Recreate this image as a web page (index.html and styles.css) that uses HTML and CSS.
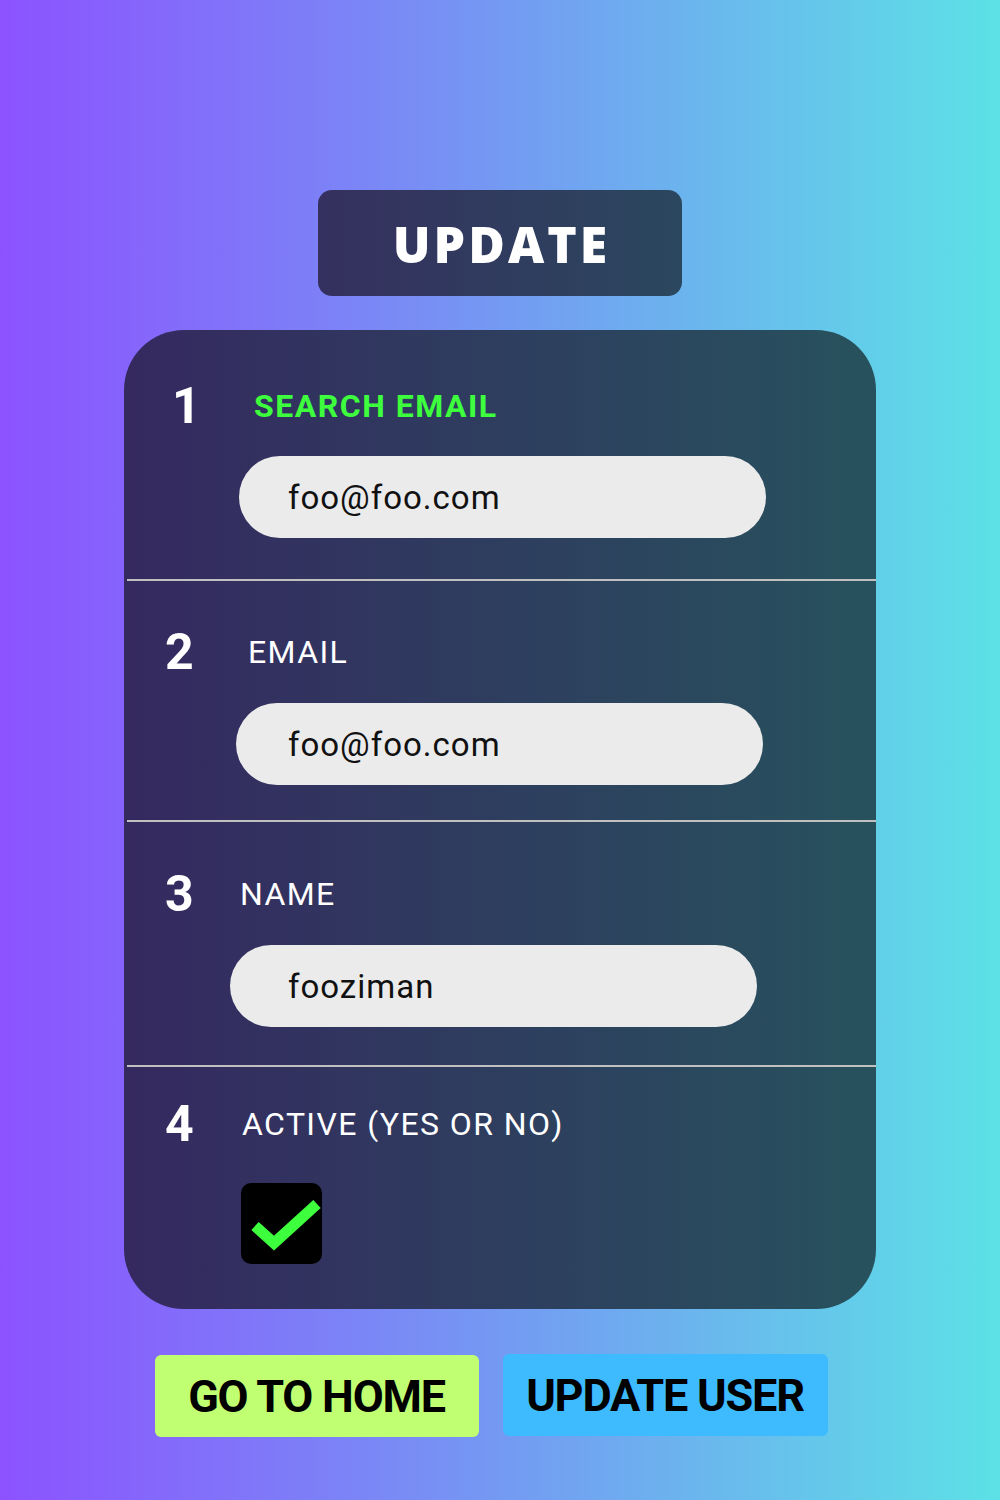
FILE: index.html
```html
<!DOCTYPE html>
<html lang="en">
<head>
<meta charset="utf-8">
<title>Update</title>
<link rel="stylesheet" href="styles.css">
</head>
<body>
<main class="page">
  <h1 class="title">UPDATE</h1>
  <section class="card">
    <div class="row row-1">
      <div class="row-head">
        <span class="num num-1">1</span>
        <span class="label label-accent">SEARCH EMAIL</span>
      </div>
      <div class="field field-1">foo@foo.com</div>
    </div>
    <div class="row row-2">
      <div class="row-head">
        <span class="num">2</span>
        <span class="label label-2">EMAIL</span>
      </div>
      <div class="field field-2">foo@foo.com</div>
    </div>
    <div class="row row-3">
      <div class="row-head">
        <span class="num">3</span>
        <span class="label label-3">NAME</span>
      </div>
      <div class="field field-3">fooziman</div>
    </div>
    <div class="row row-4">
      <div class="row-head">
        <span class="num">4</span>
        <span class="label label-4">ACTIVE (YES OR NO)</span>
      </div>
      <div class="check">
        <svg width="81" height="81" viewBox="0 0 81 81" aria-hidden="true">
          <polyline points="14,43 33,60 76,21" fill="none" stroke="#3dff3d" stroke-width="11" stroke-linejoin="miter" stroke-linecap="butt"/>
        </svg>
      </div>
    </div>
  </section>
  <div class="actions">
    <button class="btn btn-home">GO TO HOME</button>
    <button class="btn btn-update">UPDATE USER</button>
  </div>
</main>
</body>
</html>
```

FILE: styles.css
```css
html, body {
  margin: 0;
  padding: 0;
}
body {
  width: 1000px;
  height: 1500px;
  background: linear-gradient(90deg, #8c52ff 0%, #5ce1e6 100%);
  font-family: Roboto, "Liberation Sans", sans-serif;
  overflow: hidden;
}
.page {
  display: flex;
  flex-direction: column;
  align-items: center;
  padding-top: 190px;
}
.title {
  margin: 0;
  width: 364px;
  height: 106px;
  border-radius: 14px;
  background: linear-gradient(90deg, #35305f 0%, #2b475e 100%);
  color: #fff;
  font-family: "Open Sans", "DejaVu Sans", sans-serif;
  font-weight: 800;
  font-size: 50px;
  letter-spacing: 3px;
  display: flex;
  align-items: center;
  justify-content: center;
  box-sizing: border-box;
  padding: 2px 0 0 3px;
}
.card {
  margin-top: 34px;
  width: 752px;
  border-radius: 60px;
  background: linear-gradient(90deg, #352960 0%, #27525d 100%);
  overflow: hidden;
  color: #fff;
}
.row {
  display: flex;
  flex-direction: column;
  align-items: flex-start;
}
.row + .row {
  border-top: 2px solid #c0c0c0;
  margin-left: 3px;
}
.row-head {
  display: flex;
  align-items: center;
  height: 52px;
}
.num {
  font-weight: 700;
  font-size: 50px;
  line-height: 52px;
  width: 41px;
  padding-left: 38px;
}
.num-1 {
  padding-left: 48px;
}
.label {
  font-size: 32px;
  line-height: 52px;
  font-weight: 400;
  letter-spacing: 1.4px;
}
.label-accent {
  color: #3dff3d;
  font-weight: 700;
  letter-spacing: 1.5px;
  margin-left: 41px;
}
.label-2 { margin-left: 42px; }
.label-3 { margin-left: 34px; }
.label-4 { margin-left: 36px; }

.row-1 { padding: 50px 0 41px; }
.row-2 { padding: 45px 0 35px; }
.row-3 { padding: 46px 0 38px; }
.row-4 { padding: 31px 0 45px; }

.field {
  width: 527px;
  height: 82px;
  border-radius: 41px;
  background: #ebebeb;
  color: #111;
  font-size: 33px;
  letter-spacing: 1px;
  display: flex;
  align-items: center;
  box-sizing: border-box;
}
.field-1 { margin: 24px 0 0 115px; padding-left: 49px; }
.field-2 { margin: 25px 0 0 109px; padding-left: 52px; }
.field-3 { margin: 25px 0 0 103px; padding-left: 58px; }

.check {
  margin: 33px 0 0 114px;
  width: 81px;
  height: 81px;
  background: #000;
  border-radius: 10px;
  overflow: hidden;
}
.check svg { display: block; }

.actions {
  margin-top: 46px;
  margin-right: 18px;
  display: flex;
  gap: 24px;
  align-items: flex-start;
}
.btn {
  border: none;
  width: 324px;
  height: 82px;
  border-radius: 6px;
  font-family: Roboto, "Liberation Sans", sans-serif;
  font-weight: 700;
  font-size: 45px;
  letter-spacing: -1.2px;
  color: #000;
  padding: 0;
  display: flex;
  align-items: center;
  justify-content: center;
}
.btn-home { background: #c1ff72; }
.btn-update { background: #3ebaff; margin-top: -1px; width: 325px; }
```
